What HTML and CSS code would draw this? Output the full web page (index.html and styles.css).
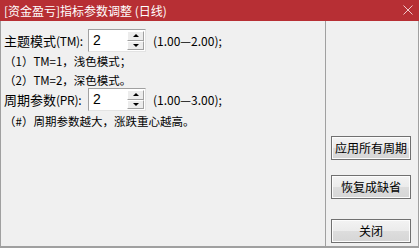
FILE: index.html
```html
<!DOCTYPE html>
<html>
<head>
<meta charset="utf-8">
<link rel="stylesheet" href="styles.css">
</head>
<body>
<div class="window">
  <div class="titlebar">
    <span class="title">[资金盈亏]指标参数调整 (日线)</span>
    <svg class="close" width="10" height="10" viewBox="0 0 10 10"><path d="M0.5 0.5 L9.5 9.5 M9.5 0.5 L0.5 9.5" stroke="#f1c9cb" stroke-width="1" fill="none"/></svg>
  </div>
  <div class="content">
    <div class="params">
      <div class="row row-field">
        <span class="label">主题模式<span class="latin">(TM):</span></span>
        <div class="spin">
          <span class="spin-value">2</span>
          <div class="spin-btns">
            <div class="spin-btn"><span class="tri-up"></span></div>
            <div class="spin-btn"><span class="tri-down"></span></div>
          </div>
        </div>
        <span class="range">(1.00—2.00);</span>
      </div>
      <div class="row row-desc">（1）TM=1，浅色模式；</div>
      <div class="row row-desc">（2）TM=2，深色模式。</div>
      <div class="row row-field">
        <span class="label">周期参数<span class="latin">(PR):</span></span>
        <div class="spin">
          <span class="spin-value">2</span>
          <div class="spin-btns">
            <div class="spin-btn"><span class="tri-up"></span></div>
            <div class="spin-btn"><span class="tri-down"></span></div>
          </div>
        </div>
        <span class="range">(1.00—3.00);</span>
      </div>
      <div class="row row-desc row-last">（#）周期参数越大，涨跌重心越高。</div>
    </div>
    <div class="actions">
      <button class="btn btn-apply">应用所有周期</button>
      <button class="btn btn-reset">恢复成缺省</button>
      <button class="btn btn-close">关闭</button>
    </div>
  </div>
</div>
</body>
</html>
```

FILE: styles.css
```css
* { box-sizing: border-box; }
html, body { margin: 0; padding: 0; }
body {
  width: 419px;
  height: 248px;
  overflow: hidden;
  background: #f0f0f0;
  font-family: "Noto Sans CJK SC", "Noto Sans", sans-serif;
  color: #000;
}
.window {
  width: 419px;
  height: 248px;
  display: flex;
  flex-direction: column;
}
.titlebar {
  height: 21px;
  flex: none;
  background: #b72f34;
  color: #fff;
  display: flex;
  align-items: center;
  justify-content: space-between;
  padding: 0 6px 0 4px;
}
.title {
  font-size: 12px;
  line-height: 21px;
  white-space: nowrap;
}
.close { display: block; margin-top: -1px; }
.content {
  flex: 1;
  display: flex;
  border-left: 1px solid #a0a0a0;
  border-right: 1px solid #a0a0a0;
  border-bottom: 2px solid #a0a0a0;
  background: #f0f0f0;
}
.params {
  width: 325px;
  border-right: 1px solid #a0a0a0;
  padding: 9px 0 0 3px;
}
.row {
  display: flex;
  align-items: center;
  white-space: nowrap;
}
.row-field { height: 21px; }
.row-desc { height: 19px; font-size: 11.5px; }
.row-last { height: 21px; }
.label {
  width: 84px;
  font-size: 13px;
  line-height: 21px;
}
.latin {
  font-size: 12px;
  letter-spacing: -0.3px;
}
.spin {
  width: 58px;
  height: 23px;
  display: flex;
  background: #fff;
  border-top: 1px solid #a0a0a0;
  border-left: 1px solid #a0a0a0;
  border-right: 1px solid #e3e3e3;
  border-bottom: 1px solid #e3e3e3;
  padding: 1px;
}
.spin-value {
  flex: 1;
  font-family: "Liberation Sans", Arial, sans-serif;
  font-size: 14px;
  line-height: 19px;
  padding-left: 3px;
}
.spin-btns {
  width: 17px;
  display: flex;
  flex-direction: column;
}
.spin-btn {
  flex: 1;
  background: #ececec;
  border-top: 1px solid #fff;
  border-left: 1px solid #fff;
  border-right: 1px solid #a0a0a0;
  border-bottom: 1px solid #a0a0a0;
  display: flex;
  align-items: center;
  justify-content: center;
}
.tri-up, .tri-down {
  width: 0;
  height: 0;
  border-left: 3px solid transparent;
  border-right: 3px solid transparent;
}
.tri-up { border-bottom: 3px solid #000; }
.tri-down { border-top: 3px solid #000; }
.range {
  margin-left: 7px;
  font-size: 12px;
}
.actions {
  flex: 1;
  display: flex;
  flex-direction: column;
  padding-left: 5px;
}
.btn {
  width: 80px;
  height: 24px;
  padding: 0;
  border: 1px solid #707070;
  border-radius: 0;
  background: linear-gradient(#f3f3f3, #ebebeb 50%, #dddddd 51%, #d6d6d6);
  box-shadow: inset 0 0 0 1px #fcfcfc;
  font-family: "Noto Sans CJK SC", sans-serif;
  font-size: 12px;
  color: #000;
  line-height: 20px;
}
.btn-apply { margin-top: 115px; }
.btn-reset { margin-top: 15px; }
.btn-close { margin-top: 20px; }
```
